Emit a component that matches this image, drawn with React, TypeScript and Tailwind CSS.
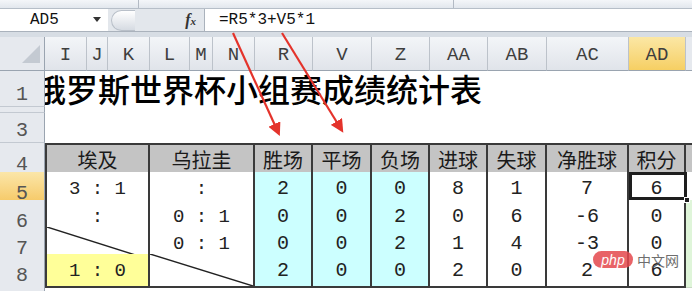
import type { ReactNode } from 'react'

const GRID =
  'grid grid-cols-[45px_42px_21px_42px_40px_23px_42px_58px_59px_58px_58px_59px_82px_57px_6px]'

const MONO = 'font-["Liberation_Mono",monospace]'
const CJK = 'font-["Noto_Sans_CJK_SC",sans-serif]'

const letters = ['I', 'J', 'K', 'L', 'M', 'N', 'R', 'V', 'Z', 'AA', 'AB', 'AC', 'AD']

type Row = { n: number; a: string | null; b: string | null; yellowA?: boolean; vals: string[] }

const rows: Row[] = [
  { n: 5, a: '3 : 1', b: ':', vals: ['2', '0', '0', '8', '1', '7', '6'] },
  { n: 6, a: ':', b: '0 : 1', vals: ['0', '0', '2', '0', '6', '-6', '0'] },
  { n: 7, a: null, b: '0 : 1', vals: ['0', '0', '2', '1', '4', '-3', '0'] },
  { n: 8, a: '1 : 0', b: null, yellowA: true, vals: ['2', '0', '0', '2', '0', '2', '6'] },
]

const heads = ['胜场', '平场', '负场', '进球', '失球', '净胜球', '积分']

function RowHead({ n, active }: { n: number | string; active?: boolean }) {
  return (
    <div
      className={`flex items-end justify-center overflow-hidden border-r border-b border-r-[#9aa4b0] border-b-[#c3c9d1] ${MONO} text-[20px] leading-none text-[#555] ${
        active ? 'bg-linear-to-b from-[#fbe6a8] to-[#f5c65e]' : 'bg-[#e6e9ee]'
      }`}
    >
      <span className="pb-[1px]">{n}</span>
    </div>
  )
}

function Diagonal() {
  return (
    <svg className="absolute inset-0 h-full w-full" preserveAspectRatio="none" viewBox="0 0 100 100">
      <line x1="0" y1="0" x2="100" y2="100" stroke="#222" strokeWidth="1.4" vectorEffect="non-scaling-stroke" />
    </svg>
  )
}

function Cell({
  children,
  span,
  bg = 'bg-white',
  first,
  top,
}: {
  children?: ReactNode
  span?: string
  bg?: string
  first?: boolean
  top?: boolean
}) {
  return (
    <div
      className={`relative flex items-center justify-center border-r-2 border-b-2 border-[#3a3a3a] ${bg} ${span ?? ''} ${
        first ? 'border-l-2' : ''
      } ${top ? 'border-t-2' : ''}`}
    >
      {children}
    </div>
  )
}

function FormulaBar() {
  return (
    <div className="flex h-[37px] flex-col bg-[#dfe4ea]">
      <div className="relative h-[9px] border-b border-[#b6bec8] bg-linear-to-b from-[#f4f6f9] to-[#e2e7ed]">
        <div className="absolute top-0 left-[138px] h-full w-px bg-[#b3bac4]" />
        <div className="absolute top-0 left-[453px] h-full w-px bg-[#b3bac4]" />
      </div>
      <div className="flex h-[23px] items-stretch border-b border-[#aab2bc]">
        <div className={`relative flex w-[108px] items-center bg-white pl-[30px] ${MONO} text-[16px] text-[#111]`}>
          AD5
          <span className="absolute left-[93px] top-[8px] h-0 w-0 border-x-[4px] border-t-[5px] border-x-transparent border-t-[#333]" />
        </div>
        <div className="flex w-[96px] items-center bg-[#e3e7ec]">
          <div className="ml-[3px] h-[21px] w-[24px] rounded-l-full border border-r-0 border-[#b9c0c9] bg-linear-to-b from-white to-[#d6dbe2]" />
          <span className='ml-auto mr-[8px] font-["Liberation_Serif",serif] text-[16px] font-bold italic text-[#333]'>
            f<span className="text-[11px]">x</span>
          </span>
        </div>
        <div className={`flex flex-1 items-center border-l border-[#aab2bc] bg-white pl-[14px] ${MONO} text-[16px] text-[#111]`}>
          =R5*3+V5*1
        </div>
      </div>
      <div className="flex-1 bg-[#d7dde4]" />
    </div>
  )
}

export default function App() {
  return (
    <div className="relative h-[291px] w-[692px] overflow-hidden bg-white">
      <FormulaBar />

      {/* column letters */}
      <div className={`${GRID} h-[30px]`}>
        <div className="relative border-r border-b border-[#9aa4b0] bg-[#e6e9ee]">
          <svg className="absolute left-0 top-0" width="45" height="30">
            <polygon points="40,8 40,26 22,26" fill="#c4cad2" />
          </svg>
        </div>
        {letters.map((l) => (
          <div
            key={l}
            className={`flex items-center justify-center border-r border-b border-r-[#bcc2ca] border-b-[#9aa4b0] pt-[4px] ${MONO} text-[19px] text-[#3e3e3e] ${
              l === 'AD'
                ? 'bg-linear-to-b from-[#fbe7a4] to-[#f6cf62]'
                : 'bg-linear-to-b from-[#f3f5f8] to-[#e0e4ea]'
            }`}
          >
            {l}
          </div>
        ))}
        <div className="border-b border-[#9aa4b0] bg-[#e6e9ee]" />
      </div>

      {/* rows 1-3 */}
      <div className={`${GRID} h-[40px]`}>
        <RowHead n={1} />
        <div className="col-span-14 flex items-center overflow-hidden pt-[2px]">
          <span className={`-ml-[11px] whitespace-nowrap ${CJK} text-[32px] leading-none font-medium text-black`}>
            俄罗斯世界杯小组赛成绩统计表
          </span>
        </div>
      </div>
      <div className={`${GRID} h-[6px]`}>
        <RowHead n={2} />
        <div className="col-span-14" />
      </div>
      <div className={`${GRID} h-[30px]`}>
        <RowHead n={3} />
        <div className="col-span-14" />
      </div>

      {/* row 4 headers */}
      <div className={`${GRID} h-[29px]`}>
        <RowHead n={4} />
        <Cell span="col-span-3" bg="bg-[#c4c4c4]" first top>
          <span className={`${CJK} text-[20px] text-[#1a1a1a]`}>埃及</span>
        </Cell>
        <Cell span="col-span-3" bg="bg-[#c4c4c4]" top>
          <span className={`${CJK} text-[20px] text-[#1a1a1a]`}>乌拉圭</span>
        </Cell>
        {heads.map((h) => (
          <Cell key={h} bg="bg-[#c4c4c4]" top>
            <span className={`${CJK} text-[20px] text-[#1a1a1a]`}>{h}</span>
          </Cell>
        ))}
        <div className="border-t-2 border-b-2 border-[#3a3a3a] bg-[#c4c4c4]" />
      </div>

      {rows.map((r, i) => (
        <div key={r.n} className={`${GRID} ${i === 0 || i === 3 ? 'h-[28px]' : 'h-[27px]'}`}>
          <RowHead n={r.n} active={r.n === 5} />
          <Cell span="col-span-3" first bg={r.yellowA ? 'bg-[#ffff99]' : 'bg-white'}>
            {r.a === null ? <Diagonal /> : <span className={`${MONO} pt-[2px] text-[19px] text-[#222]`}>{r.a}</span>}
          </Cell>
          <Cell span="col-span-3">
            {r.b === null ? <Diagonal /> : <span className={`${MONO} pt-[2px] text-[19px] text-[#222]`}>{r.b}</span>}
          </Cell>
          {r.vals.map((v, j) => (
            <Cell key={j} bg={j < 3 ? 'bg-[#ccffff]' : 'bg-white'}>
              <span className={`${MONO} pt-[2px] text-[20px] text-[#222]`}>{v}</span>
            </Cell>
          ))}
          <div className={`border-b border-[#c9d8c4] ${r.n === 5 ? 'bg-white' : 'bg-[#dff5d9]'}`} />
        </div>
      ))}

      <div className={`${GRID} h-[9px]`}>
        <div className="border-r border-[#9aa4b0] bg-[#e6e9ee]" />
      </div>

      {/* active cell AD5 */}
      <div className="absolute left-[629px] top-[172px] h-[28px] w-[58px] border-[3px] border-[#1e1e1e]" />
      <div className="absolute left-[684px] top-[197px] h-[6px] w-[6px] border border-white bg-[#1e1e1e]" />

      {/* red arrows */}
      <svg className="pointer-events-none absolute inset-0" width="692" height="291">
        <defs>
          <marker id="ah" markerWidth="6" markerHeight="6" refX="4" refY="3" orient="auto">
            <path d="M0,0 L6,3 L0,6 z" fill="#e4332b" />
          </marker>
        </defs>
        <line x1="233" y1="33" x2="278" y2="132" stroke="#e4332b" strokeWidth="2.2" markerEnd="url(#ah)" />
        <line x1="282" y1="33" x2="341" y2="129" stroke="#e4332b" strokeWidth="2.2" markerEnd="url(#ah)" />
      </svg>

      {/* watermark */}
      <div className="pointer-events-none absolute left-[593px] top-[251px] flex items-center gap-[4px] opacity-85">
        <span className='flex h-[17px] w-[40px] items-center justify-center rounded-full bg-[#e5484d] font-["Liberation_Sans",sans-serif] text-[14px] italic leading-none text-white'>
          php
        </span>
        <span className={`${CJK} text-[14px] leading-none text-[#555]`}>中文网</span>
      </div>
    </div>
  )
}
